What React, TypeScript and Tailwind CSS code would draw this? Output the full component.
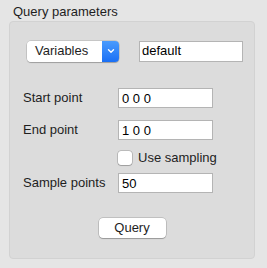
function Field({ value }: { value: string }) {
  return (
    <div className="w-[95px] h-[20px] bg-white border border-[#b4b4b4] flex items-center pl-[3px] text-[13px] text-black leading-none">
      {value}
    </div>
  );
}

function Row({ label, value }: { label: string; value: string }) {
  return (
    <div className="flex items-center h-[20px]">
      <div className="w-[95px] text-[13px] text-[#1e1e1e]">{label}</div>
      <Field value={value} />
    </div>
  );
}

export default function App() {
  return (
    <div
      className="w-[267px] h-[268px] bg-[#e5e5e5] flex flex-col"
      style={{ fontFamily: '"Liberation Sans", Arial, sans-serif' }}
    >
      <div className="pl-[13px] pt-[4px] h-[21px] text-[13px] text-[#1e1e1e] leading-[15px]">
        Query parameters
      </div>
      <div className="ml-[9px] w-[246px] h-[238px] bg-[#dcdcdc] border border-[#d2d2d2] rounded-[4px] flex flex-col">
        <div className="flex items-center mt-[18px] h-[22px]">
          <div className="ml-[17px] w-[92px] h-[21px] flex rounded-[4px] shadow-[0_0_0_0.5px_rgba(0,0,0,0.2),0_1px_1px_rgba(0,0,0,0.2)] overflow-hidden">
            <div className="flex-1 bg-white flex items-center pl-[8px] text-[13px] text-[#1e1e1e]">
              Variables
            </div>
            <div className="w-[17px] bg-gradient-to-b from-[#4a9bfd] to-[#1a6ff5] flex items-center justify-center">
              <svg width="8" height="6" viewBox="0 0 8 6">
                <path d="M1.5 1.8 L4 4.2 L6.5 1.8" stroke="white" strokeWidth="1.4" fill="none" strokeLinecap="round" strokeLinejoin="round" />
              </svg>
            </div>
          </div>
          <div className="ml-[20px] w-[104px] h-[21px] bg-white border border-[#b4b4b4] flex items-center pl-[2px] text-[13px] text-black">
            default
          </div>
        </div>
        <div className="flex flex-col ml-[13px] mt-[26px] gap-[12px]">
          <Row label="Start point" value="0 0 0" />
          <Row label="End point" value="1 0 0" />
        </div>
        <div className="flex items-center ml-[108px] mt-[11px] h-[14px] gap-[6px]">
          <div className="w-[14px] h-[14px] bg-white rounded-[3px] shadow-[0_0_0_0.5px_rgba(0,0,0,0.3),0_1px_1px_rgba(0,0,0,0.15)]" />
          <span className="text-[13px] text-[#1e1e1e]">Use sampling</span>
        </div>
        <div className="ml-[13px] mt-[8px]">
          <Row label="Sample points" value="50" />
        </div>
        <div className="flex justify-center mt-[25px]">
          <button className="w-[67px] h-[20px] bg-white rounded-[4px] text-[13px] text-[#1e1e1e] shadow-[0_0_0_0.5px_rgba(0,0,0,0.25),0_1px_1px_rgba(0,0,0,0.2)] flex items-center justify-center">
            Query
          </button>
        </div>
      </div>
    </div>
  );
}
